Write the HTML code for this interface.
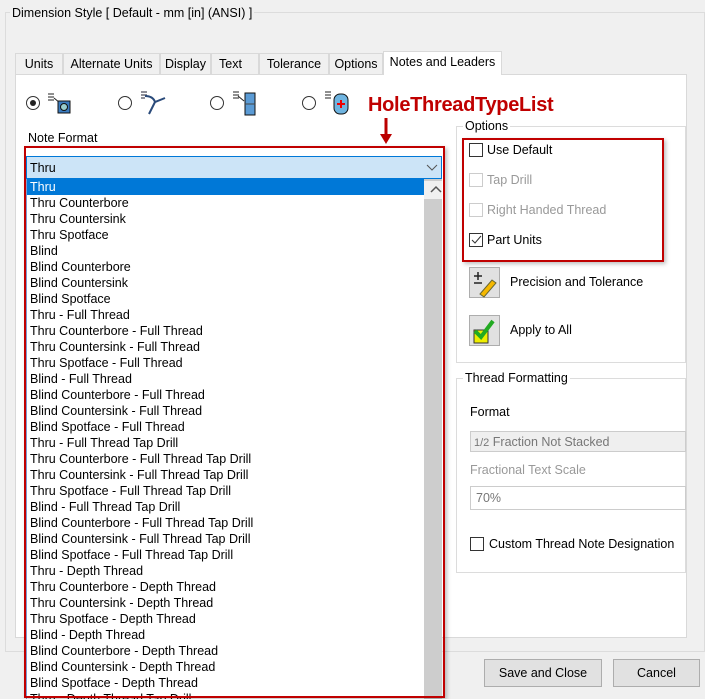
<!DOCTYPE html>
<html><head><style>
*{box-sizing:border-box;margin:0;padding:0}
body{width:705px;height:698px;background:#f0f0f0;font-family:"Liberation Sans",sans-serif;font-size:12px;color:#000;position:relative;overflow:hidden}
.a{position:absolute}
.grp{position:absolute;border:1px solid #dcdcdc}
.lbl{position:absolute;background:#f0f0f0;padding:0 2px;white-space:nowrap}
.tab{position:absolute;top:53px;height:21px;border:1px solid #d9d9d9;border-bottom:none;background:#f0f0f0;padding:3px 0 0 0;text-align:center;font-size:12.5px}
.radio{position:absolute;width:14px;height:14px;border:1px solid #333;border-radius:50%;background:#fff}
.list div{height:16px;line-height:16px;padding-left:3px;white-space:nowrap;font-size:12.5px}
.cb{position:absolute;width:14px;height:14px;border:1px solid #333;background:#fff}
.cb.d{border-color:#ccc}
.btn{position:absolute;border:1px solid #adadad;background:#e1e1e1;text-align:center;font-size:12.5px}
.ib{position:absolute;width:31px;height:31px;border:1px solid #adadad;background:#e1e1e1}
</style></head><body>
<div class="grp" style="left:5px;top:12px;width:700px;height:640px"></div>
<div class="lbl" style="left:10px;top:6px;font-size:12.5px">Dimension Style [ Default - mm [in] (ANSI) ]</div>
<div class="a" style="left:15px;top:74px;width:672px;height:564px;background:#fff;border:1px solid #d9d9d9"></div>
<div class="tab" style="left:15px;width:48px">Units</div>
<div class="tab" style="left:63px;width:97px">Alternate Units</div>
<div class="tab" style="left:160px;width:51px">Display</div>
<div class="tab" style="left:211px;width:48px;text-align:left;padding-left:7px">Text</div>
<div class="tab" style="left:259px;width:70px">Tolerance</div>
<div class="tab" style="left:329px;width:54px">Options</div>
<div class="tab" style="left:383px;top:51px;height:24px;width:119px;background:#fff">Notes and Leaders</div>

<div class="radio" style="left:26px;top:96px"><div class="a" style="left:3px;top:3px;width:6px;height:6px;border-radius:50%;background:#222"></div></div>
<svg class="a" style="left:47px;top:92px" width="28" height="24"><path d="M1 2h6M1 5h6M1 8h6M7 6l6 5" stroke="#222" fill="none"/><rect x="11" y="9" width="12" height="12" fill="#3a7bbf" stroke="#111"/><circle cx="17" cy="15" r="3.5" fill="#9cc" stroke="#111"/></svg>
<div class="radio" style="left:118px;top:96px"></div>
<svg class="a" style="left:140px;top:90px" width="28" height="28"><path d="M1 2h6M1 5h6M1 8h4" stroke="#223" fill="none"/><path d="M5 6q8 0 10 6l10-4M15 12l-6 12" stroke="#2a4a7a" stroke-width="2" fill="none"/></svg>
<div class="radio" style="left:210px;top:96px"></div>
<svg class="a" style="left:232px;top:90px" width="28" height="28"><path d="M1 2h6M1 5h6M1 8h6M6 6l6 5" stroke="#222" fill="none"/><rect x="13" y="3" width="10" height="22" fill="#5b9bd5" stroke="#111"/><path d="M13 14h10" stroke="#444"/></svg>
<div class="radio" style="left:302px;top:96px"></div>
<svg class="a" style="left:324px;top:90px" width="28" height="28"><path d="M1 2h6M1 5h6M1 8h6" stroke="#222" fill="none"/><rect x="10" y="4" width="14" height="20" rx="6" fill="#6fb4e0" stroke="#111"/><path d="M17 10v8M13 14h8" stroke="#e00" stroke-width="2"/></svg>

<div class="a" style="left:368px;top:94px;font-size:20px;font-weight:bold;color:#c00000;letter-spacing:-0.3px">HoleThreadTypeList</div>
<svg class="a" style="left:378px;top:118px" width="16" height="30"><path d="M8 0v18" stroke="#b00" stroke-width="3"/><path d="M2 16l6 10 6-10z" fill="#b00"/></svg>
<div class="a" style="left:28px;top:131px;font-size:12.5px">Note Format</div>

<div class="a" style="left:26px;top:156px;width:416px;height:23px;background:#cce4f7;border:1px solid #0078d7"><span class="a" style="left:3px;top:4px;font-size:12.5px">Thru</span><svg class="a" style="left:399px;top:7px" width="12" height="8"><path d="M1 1l5 5 5-5" stroke="#555" fill="none"/></svg></div>
<div class="a list" style="left:26px;top:179px;width:416px;height:520px;background:#fff;border-left:1px solid #7a9cd3;overflow:hidden">
<div style="background:#0078d7;color:#fff;margin-right:17px">Thru</div>
<div>Thru Counterbore</div><div>Thru Countersink</div><div>Thru Spotface</div><div>Blind</div><div>Blind Counterbore</div><div>Blind Countersink</div><div>Blind Spotface</div><div>Thru - Full Thread</div><div>Thru Counterbore - Full Thread</div><div>Thru Countersink - Full Thread</div><div>Thru Spotface - Full Thread</div><div>Blind - Full Thread</div><div>Blind Counterbore - Full Thread</div><div>Blind Countersink - Full Thread</div><div>Blind Spotface - Full Thread</div><div>Thru - Full Thread Tap Drill</div><div>Thru Counterbore - Full Thread Tap Drill</div><div>Thru Countersink - Full Thread Tap Drill</div><div>Thru Spotface - Full Thread Tap Drill</div><div>Blind - Full Thread Tap Drill</div><div>Blind Counterbore - Full Thread Tap Drill</div><div>Blind Countersink - Full Thread Tap Drill</div><div>Blind Spotface - Full Thread Tap Drill</div><div>Thru - Depth Thread</div><div>Thru Counterbore - Depth Thread</div><div>Thru Countersink - Depth Thread</div><div>Thru Spotface - Depth Thread</div><div>Blind - Depth Thread</div><div>Blind Counterbore - Depth Thread</div><div>Blind Countersink - Depth Thread</div><div>Blind Spotface - Depth Thread</div><div>Thru - Depth Thread Tap Drill</div>
<div class="a" style="left:397px;top:0;width:18px;height:520px;background:#cdcdcd"></div>
<div class="a" style="left:397px;top:2px;width:18px;height:18px;background:#f0f0f0"><svg width="18" height="18"><path d="M4 11l5-5 5 5" stroke="#555" stroke-width="1.5" fill="none"/></svg></div>
</div>
<div class="a" style="left:24px;top:146px;width:421px;height:552px;border:2px solid #c00000;box-shadow:2px 2px 4px rgba(0,0,0,.25)"></div>

<div class="grp" style="left:456px;top:126px;width:230px;height:237px"></div>
<div class="lbl" style="left:463px;top:119px;background:#fff;font-size:12.5px">Options</div>
<div class="cb" style="left:469px;top:143px"></div><div class="a" style="left:487px;top:143px;font-size:12.5px">Use Default</div>
<div class="cb d" style="left:469px;top:173px"></div><div class="a" style="left:487px;top:173px;font-size:12.5px;color:#999">Tap Drill</div>
<div class="cb d" style="left:469px;top:203px"></div><div class="a" style="left:487px;top:203px;font-size:12.5px;color:#999">Right Handed Thread</div>
<div class="cb" style="left:469px;top:233px"><svg width="12" height="12"><path d="M2 6l3 3 6-7" stroke="#333" fill="none"/></svg></div><div class="a" style="left:487px;top:233px;font-size:12.5px">Part Units</div>
<div class="a" style="left:462px;top:138px;width:202px;height:124px;border:2px solid #c00000;box-shadow:2px 2px 4px rgba(0,0,0,.25)"></div>
<div class="ib" style="left:469px;top:267px"><svg width="30" height="30"><path d="M4 8h8M8 4v8M4 15h8" stroke="#222" stroke-width="1.5"/><path d="M10 26l12-14 4 3-12 14z" fill="#f5b800" stroke="#663"/></svg></div>
<div class="a" style="left:510px;top:275px;font-size:12.5px">Precision and Tolerance</div>
<div class="ib" style="left:469px;top:315px"><svg width="30" height="30"><rect x="4" y="14" width="14" height="13" fill="#ee0" stroke="#333"/><path d="M5 15l6 6 12-16" stroke="#2a2" stroke-width="4" fill="none"/></svg></div>
<div class="a" style="left:510px;top:323px;font-size:12.5px">Apply to All</div>

<div class="grp" style="left:456px;top:378px;width:230px;height:195px"></div>
<div class="lbl" style="left:463px;top:371px;background:#fff;font-size:12.5px">Thread Formatting</div>
<div class="a" style="left:470px;top:405px;font-size:12.5px">Format</div>
<div class="a" style="left:470px;top:431px;width:216px;height:21px;background:#efefef;border:1px solid #ccc;color:#777;padding:3px 0 0 3px;font-size:12.5px"><span style="font-size:11px">1/2</span> Fraction Not Stacked</div>
<div class="a" style="left:470px;top:463px;font-size:12.5px;color:#999">Fractional Text Scale</div>
<div class="a" style="left:470px;top:486px;width:216px;height:24px;background:#fff;border:1px solid #ccc;color:#777;padding:4px 0 0 5px;font-size:12.5px">70%</div>
<div class="cb" style="left:470px;top:537px"></div><div class="a" style="left:489px;top:537px;font-size:12.5px">Custom Thread Note Designation</div>

<div class="btn" style="left:484px;top:659px;width:118px;height:28px;line-height:26px">Save and Close</div>
<div class="btn" style="left:613px;top:659px;width:87px;height:28px;line-height:26px">Cancel</div>
</body></html>
